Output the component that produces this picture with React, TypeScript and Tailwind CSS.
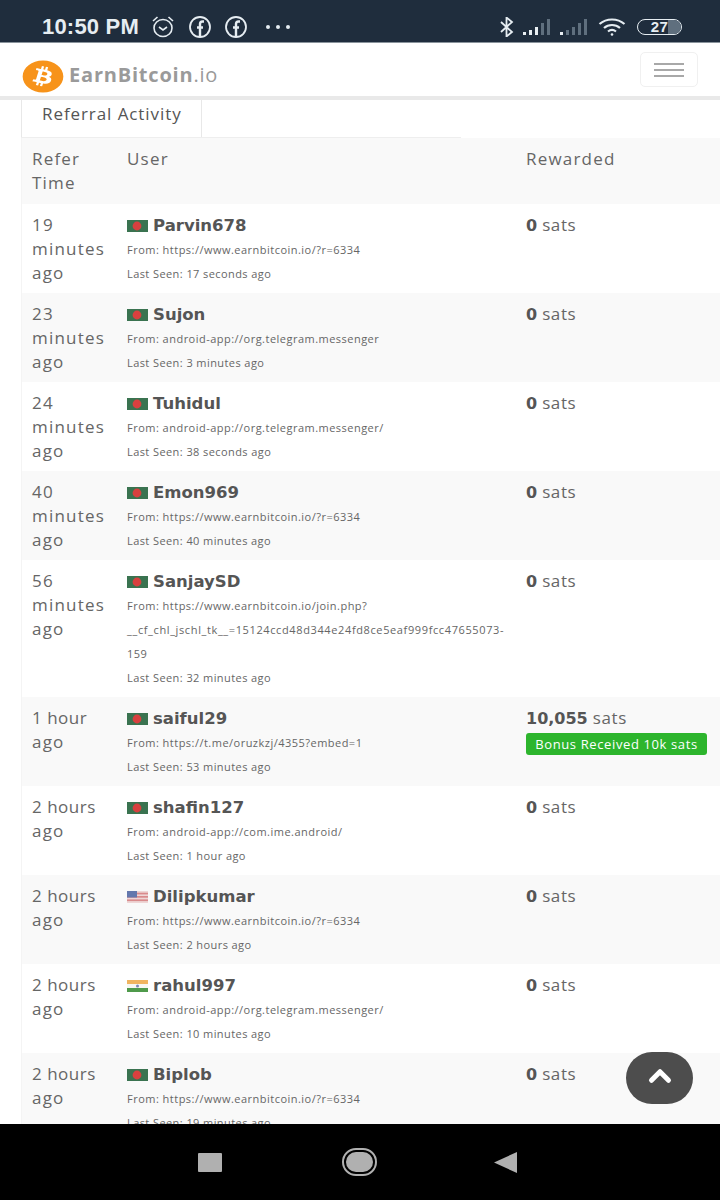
import { FaBitcoin } from 'react-icons/fa';
import { ChevronUp } from 'lucide-react';

type Row = { time: string[]; name: string; flag: 'bd' | 'us' | 'in'; from: string[]; seen: string; sats: string; bonus?: boolean };

const rows: Row[] = [
  { time: ['19', 'minutes', 'ago'], name: 'Parvin678', flag: 'bd', from: ['From: https://www.earnbitcoin.io/?r=6334'], seen: '17 seconds ago', sats: '0' },
  { time: ['23', 'minutes', 'ago'], name: 'Sujon', flag: 'bd', from: ['From: android-app://org.telegram.messenger'], seen: '3 minutes ago', sats: '0' },
  { time: ['24', 'minutes', 'ago'], name: 'Tuhidul', flag: 'bd', from: ['From: android-app://org.telegram.messenger/'], seen: '38 seconds ago', sats: '0' },
  { time: ['40', 'minutes', 'ago'], name: 'Emon969', flag: 'bd', from: ['From: https://www.earnbitcoin.io/?r=6334'], seen: '40 minutes ago', sats: '0' },
  { time: ['56', 'minutes', 'ago'], name: 'SanjaySD', flag: 'bd', from: ['From: https://www.earnbitcoin.io/join.php?', '__cf_chl_jschl_tk__=15124ccd48d344e24fd8ce5eaf999fcc47655073-', '159'], seen: '32 minutes ago', sats: '0' },
  { time: ['1 hour', 'ago'], name: 'saiful29', flag: 'bd', from: ['From: https://t.me/oruzkzj/4355?embed=1'], seen: '53 minutes ago', sats: '10,055', bonus: true },
  { time: ['2 hours', 'ago'], name: 'shafin127', flag: 'bd', from: ['From: android-app://com.ime.android/'], seen: '1 hour ago', sats: '0' },
  { time: ['2 hours', 'ago'], name: 'Dilipkumar', flag: 'us', from: ['From: https://www.earnbitcoin.io/?r=6334'], seen: '2 hours ago', sats: '0' },
  { time: ['2 hours', 'ago'], name: 'rahul997', flag: 'in', from: ['From: android-app://org.telegram.messenger/'], seen: '10 minutes ago', sats: '0' },
  { time: ['2 hours', 'ago'], name: 'Biplob', flag: 'bd', from: ['From: https://www.earnbitcoin.io/?r=6334'], seen: '19 minutes ago', sats: '0' },
];

const Flag = ({ kind }: { kind: Row['flag'] }) => (
  <svg width="21" height="12" viewBox="0 0 21 12" className="shrink-0">
    {kind === 'bd' && (
      <>
        <rect width="21" height="12" fill="#3a7350" />
        <circle cx="10" cy="6" r="4.4" fill="#d8403f" />
      </>
    )}
    {kind === 'us' && (
      <>
        <rect width="21" height="12" fill="#eed6d6" />
        <rect y="1.7" width="21" height="1.7" fill="#d98a8c" />
        <rect y="5" width="21" height="1.7" fill="#d98a8c" />
        <rect y="8.4" width="21" height="1.7" fill="#d98a8c" />
        <rect width="10" height="6.500" fill="#6478ad" />
      </>
    )}
    {kind === 'in' && (
      <>
        <rect width="21" height="4" fill="#f0b45f" />
        <rect y="4" width="21" height="4" fill="#f7f7f2" />
        <rect y="8" width="21" height="4" fill="#4f9a4b" />
        <circle cx="10.500" cy="6" r="1.500" fill="#7d86b5" />
      </>
    )}
  </svg>
);

const Signal = ({ lit }: { lit: number }) => (
  <div className="flex items-end gap-[3px] h-[16px]">
    {[3, 5, 8, 12, 16].map((h, i) => (
      <div key={h} style={{ height: h }} className={`w-[3px] ${i < lit ? 'bg-[#e8eef2]' : 'bg-[#5f6f7e]'}`} />
    ))}
  </div>
);

const FbIcon = () => (
  <svg width="24" height="24" viewBox="0 0 24 24" fill="none" stroke="#e6edf2" strokeWidth="1.8">
    <circle cx="12" cy="12" r="10" />
    <path d="M16 6.500h-1.500c-1.600 0-2.500 1-2.500 2.600V21M9 12.500h6" strokeWidth="2.400" />
  </svg>
);

const StatusBar = () => (
  <div className="h-[43px] shrink-0 bg-[#1f2d3d] text-[#e6edf2] flex items-center pt-[11px] pl-[42px] pr-[38px] border-b border-[#8a949c] font-['Liberation_Sans',sans-serif]">
    <span className="text-[22px] font-bold tracking-[0.2px] leading-none">10:50 PM</span>
    <svg width="24" height="24" viewBox="0 0 24 24" fill="none" stroke="#e6edf2" strokeWidth="1.600" className="ml-[12px]">
      <ellipse cx="12" cy="13" rx="9" ry="8.500" />
      <path d="M8 12l4 3 4-3M2 6l4.500-4M22 6l-4.500-4" />
    </svg>
    <div className="ml-[13px]"><FbIcon /></div>
    <div className="ml-[12px]"><FbIcon /></div>
    <div className="flex gap-[6px] ml-[18px]">
      <div className="w-[4px] h-[4px] rounded-full bg-[#e6edf2]" />
      <div className="w-[4px] h-[4px] rounded-full bg-[#e6edf2]" />
      <div className="w-[4px] h-[4px] rounded-full bg-[#e6edf2]" />
    </div>
    <div className="ml-auto flex items-center">
      <svg width="16" height="20" viewBox="0 0 16 20" fill="none" stroke="#e6edf2" strokeWidth="1.800">
        <path d="M2 5l11 10-5.500 4.500V.5L13 5 2 15" />
      </svg>
      <div className="ml-[8px]"><Signal lit={3} /></div>
      <div className="ml-[10px]"><Signal lit={1} /></div>
      <svg width="28" height="18" viewBox="0 0 28 18" fill="none" stroke="#e6edf2" strokeWidth="2.200" className="ml-[11px]">
        <path d="M1.500 6c7-6 18-6 25 0M6 10c4.500-4 11.500-4 16 0M10 13.500c2.500-2 5.500-2 8 0" />
        <circle cx="14" cy="16.500" r="1.300" fill="#e6edf2" stroke="none" />
      </svg>
      <div className="ml-[11px] relative w-[45px] h-[16px] rounded-full border-[1.5px] border-[#e6edf2] overflow-hidden flex items-center justify-center">
        <div className="absolute right-0 top-0 bottom-0 w-[13px] bg-[#5f6f7e]" />
        <span className="relative text-[15px] font-bold tracking-[0.5px] leading-none">27</span>
      </div>
    </div>
  </div>
);

const NavBar = () => (
  <div className="h-[57px] shrink-0 bg-white border-b-[4px] border-[#e9e9e9] flex items-center pl-[22px] pr-[22px]">
    <FaBitcoin className="w-[42px] h-[33px] text-[#f7931a] mt-[13px]" preserveAspectRatio="none" />
    <span className="ml-[5px] mt-[11px] text-[20px] tracking-[0.8px] text-[#9a9a9a] font-['Open_Sans',sans-serif] leading-none">
      <b>EarnBitcoin</b>.io
    </span>
    <div className="ml-auto w-[58px] h-[35px] border border-[#f0f0f0] rounded-[5px] flex flex-col items-center justify-center gap-[4px]">
      <div className="w-[30px] h-[2px] bg-[#a8a8a8]" />
      <div className="w-[30px] h-[2px] bg-[#a8a8a8]" />
      <div className="w-[30px] h-[2px] bg-[#a8a8a8]" />
    </div>
  </div>
);

const TableRow = ({ row, shaded }: { row: Row; shaded: boolean }) => (
  <div className={`grid grid-cols-[95px_399px_1fr] pt-[9px] pb-[7px] ${shaded ? 'bg-[#f9f9f9]' : 'bg-white'}`}>
    <div className="pl-[10px] text-[17px] leading-[24px] tracking-[1.2px] text-[#666]">
      {row.time.map((t) => (
        <div key={t} className={t.includes(' ') ? 'tracking-[0.5px]' : ''}>{t}</div>
      ))}
    </div>
    <div className="pl-[10px]">
      <div className="flex items-center gap-[5px] h-[25px] pt-[1px]">
        <Flag kind={row.flag} />
        <span className="font-['DejaVu_Sans',sans-serif] text-[16.5px] font-bold text-[#555]">{row.name}</span>
      </div>
      {row.from.map((f) => (
        <div key={f} className={`text-[11px] leading-[24px] text-[#666] whitespace-nowrap ${f.startsWith('__') ? 'tracking-[0.62px]' : 'tracking-[0.48px]'}`}>{f}</div>
      ))}
      <div className="text-[11px] leading-[24px] tracking-[0.42px] text-[#666]">Last Seen: {row.seen}</div>
    </div>
    <div className="pl-[10px] text-[17px] leading-[24px] tracking-[0.6px] text-[#666]">
      <div><b className="font-['DejaVu_Sans',sans-serif] text-[16px] tracking-normal text-[#555]">{row.sats}</b> sats</div>
      {row.bonus && (
        <div className="mt-[2px] w-[181px] h-[22px] rounded-[3px] bg-[#2db52d] text-white text-[13px] tracking-[0.62px] leading-[22px] text-center">
          Bonus Received 10k sats
        </div>
      )}
    </div>
  </div>
);

export default function App() {
  return (
    <div className="relative w-[720px] h-[1200px] flex flex-col overflow-hidden bg-white font-['Open_Sans',sans-serif]">
      <StatusBar />
      <NavBar />
      <main className="flex-1 min-h-0 overflow-hidden pl-[21px]">
        <div className="w-[181px] h-[37px] border-x border-[#e8e8e8] flex items-center pl-[20px] pb-[9px] text-[17px] tracking-[0.92px] text-[#555]">
          Referral Activity
        </div>
        <div className="w-[440px] h-px bg-[#eeeeee]" />
        <div className="border-l border-[#f4f4f4]">
          <div className="grid grid-cols-[95px_399px_1fr] h-[66px] pt-[9px] bg-[#f9f9f9] text-[17px] leading-[24px] tracking-[1.2px] text-[#666]">
            <div className="pl-[10px]">Refer<br />Time</div>
            <div className="pl-[10px]">User</div>
            <div className="pl-[10px]">Rewarded</div>
          </div>
          {rows.map((r, i) => (
            <TableRow key={r.name} row={r} shaded={i % 2 === 1} />
          ))}
        </div>
      </main>
      <div className="h-[76px] shrink-0 bg-black relative">
        <div className="w-[24px] h-[19px] rounded-[1px] bg-[#b0b0b0] absolute left-[198px] top-[29px]" />
        <div className="w-[35px] h-[28px] rounded-full border-2 border-[#b0b0b0] flex items-center justify-center absolute left-[342px] top-[24px]">
          <div className="w-[27px] h-[20px] rounded-full bg-[#b0b0b0]" />
        </div>
        <svg width="23" height="21" viewBox="0 0 23 21" className="absolute left-[494px] top-[28px]">
          <path d="M23 0v21L0 10.500z" fill="#b0b0b0" />
        </svg>
      </div>
      <button className="absolute left-[626px] top-[1052px] w-[67px] h-[52px] rounded-full bg-[#4d4d4d] flex items-center justify-center pb-[4px]">
        <ChevronUp size={34} strokeWidth={3.5} className="text-white" />
      </button>
    </div>
  );
}
